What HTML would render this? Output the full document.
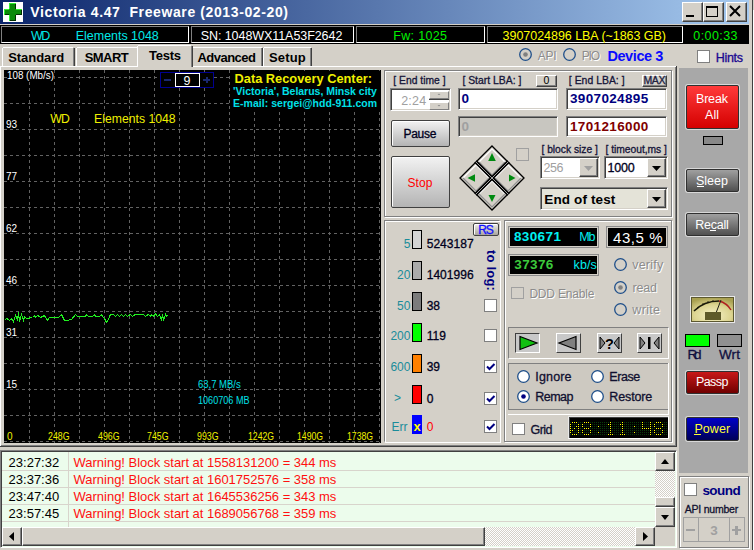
<!DOCTYPE html>
<html><head><meta charset="utf-8"><style>
html,body{margin:0;padding:0}
body{width:754px;height:550px;overflow:hidden;position:relative;background:#d4d0c8;font-family:"Liberation Sans",sans-serif}
body>div{position:absolute;box-sizing:border-box}
.t{white-space:pre}
</style></head><body>
<div style="left:749px;top:0px;width:3px;height:550px;background:#d4d0c8"></div>
<div style="left:752px;top:0px;width:1px;height:550px;background:#404040"></div>
<div style="left:753px;top:10px;width:1px;height:540px;background:#fff"></div>
<div style="left:0px;top:0px;width:749px;height:24px;background:linear-gradient(to right,#0a246a,#a6caf0)"></div>
<div style="left:3px;top:2px;width:20px;height:20px;background:#fff"></div>
<div style="left:9px;top:3px;width:7px;height:18px;background:#0a8a0a"></div>
<div style="left:4px;top:9px;width:18px;height:6px;background:#0a8a0a"></div>
<div style="left:9px;top:3px;width:1px;height:6px;background:#30f030"></div>
<div style="left:9px;top:3px;width:7px;height:1px;background:#30f030"></div>
<div style="left:4px;top:9px;width:5px;height:1px;background:#30f030"></div>
<div style="left:4px;top:9px;width:1px;height:6px;background:#30f030"></div>
<div style="left:16px;top:9px;width:6px;height:1px;background:#30f030"></div>
<div style="left:9px;top:15px;width:1px;height:6px;background:#30f030"></div>
<div style="left:15px;top:4px;width:1px;height:5px;background:#003000"></div>
<div style="left:21px;top:10px;width:1px;height:5px;background:#003000"></div>
<div style="left:5px;top:14px;width:4px;height:1px;background:#003000"></div>
<div style="left:16px;top:14px;width:6px;height:1px;background:#003000"></div>
<div style="left:15px;top:15px;width:1px;height:6px;background:#003000"></div>
<div style="left:10px;top:20px;width:6px;height:1px;background:#003000"></div>
<div class="t" style="left:30.30px;top:5.00px;font-size:14px;line-height:14px;color:#fff;font-weight:bold;letter-spacing:0.609px;">Victoria 4.47  Freeware (2013-02-20)</div>
<div style="left:682px;top:2px;width:21px;height:20px;background:#d4d0c8;border:1px solid;border-color:#fff #404040 #404040 #fff;box-shadow:inset -1px -1px #808080;"></div>
<div style="left:703px;top:2px;width:21px;height:20px;background:#d4d0c8;border:1px solid;border-color:#fff #404040 #404040 #fff;box-shadow:inset -1px -1px #808080;"></div>
<div style="left:726px;top:2px;width:21px;height:20px;background:#d4d0c8;border:1px solid;border-color:#fff #404040 #404040 #fff;box-shadow:inset -1px -1px #808080;"></div>
<div style="left:686px;top:15px;width:8px;height:2px;background:#000"></div>
<div style="left:706px;top:6px;width:12px;height:11px;border:1px solid #000;border-top-width:2px"></div>
<svg style="position:absolute;left:729px;top:5px" width="12" height="12" viewBox="0 0 12 12"><path d="M1 1L11 11M11 1L1 11" stroke="#000" stroke-width="2"/></svg>
<div style="left:0px;top:25px;width:749px;height:19px;background:#000"></div>
<div style="left:1px;top:26px;width:188px;height:17px;border:1px solid;border-color:#808080 #fff #fff #808080"></div>
<div style="left:191px;top:26px;width:163px;height:17px;border:1px solid;border-color:#808080 #fff #fff #808080"></div>
<div style="left:356px;top:26px;width:129px;height:17px;border:1px solid;border-color:#808080 #fff #fff #808080"></div>
<div style="left:487px;top:26px;width:196px;height:17px;border:1px solid;border-color:#808080 #fff #fff #808080"></div>
<div class="t" style="left:31.00px;top:30.00px;font-size:12.5px;line-height:12.5px;color:#00e8e8;letter-spacing:-1.575px;">WD</div>
<div class="t" style="left:75.80px;top:30.00px;font-size:12.5px;line-height:12.5px;color:#00e8e8;letter-spacing:-0.031px;">Elements 1048</div>
<div class="t" style="left:200.70px;top:30.00px;font-size:12.5px;line-height:12.5px;color:#fff;letter-spacing:-0.067px;">SN: 1048WX11A53F2642</div>
<div class="t" style="left:393.30px;top:30.00px;font-size:12.5px;line-height:12.5px;color:#00f000;letter-spacing:0.318px;">Fw: 1025</div>
<div class="t" style="left:502.60px;top:30.00px;font-size:12.5px;line-height:12.5px;color:#ffff00;letter-spacing:-0.041px;">3907024896 LBA (~1863 GB)</div>
<div class="t" style="left:693.30px;top:30.00px;font-size:12.5px;line-height:12.5px;color:#00f000;letter-spacing:0.408px;">0:00:33</div>
<div style="left:0px;top:66px;width:677px;height:1px;background:#fff"></div>
<div style="left:0px;top:66px;width:1px;height:381px;background:#fff"></div>
<div style="left:675px;top:67px;width:1px;height:379px;background:#808080"></div>
<div style="left:676px;top:66px;width:1px;height:381px;background:#404040"></div>
<div style="left:1px;top:445px;width:675px;height:1px;background:#808080"></div>
<div style="left:0px;top:446px;width:677px;height:1px;background:#404040"></div>
<div style="left:2px;top:48px;width:1px;height:18px;background:#fff"></div>
<div style="left:3px;top:47px;width:70px;height:1px;background:#fff"></div>
<div style="left:73px;top:48px;width:1px;height:18px;background:#808080"></div>
<div style="left:74px;top:48px;width:1px;height:18px;background:#404040"></div>
<div style="left:76px;top:48px;width:1px;height:18px;background:#fff"></div>
<div style="left:77px;top:47px;width:60px;height:1px;background:#fff"></div>
<div style="left:193px;top:47px;width:69px;height:1px;background:#fff"></div>
<div style="left:261px;top:48px;width:1px;height:18px;background:#808080"></div>
<div style="left:262px;top:48px;width:1px;height:18px;background:#404040"></div>
<div style="left:263px;top:48px;width:1px;height:18px;background:#fff"></div>
<div style="left:264px;top:47px;width:47px;height:1px;background:#fff"></div>
<div style="left:310px;top:48px;width:1px;height:18px;background:#808080"></div>
<div style="left:311px;top:48px;width:1px;height:18px;background:#404040"></div>
<div style="left:137px;top:45px;width:55px;height:22px;background:#d4d0c8"></div>
<div style="left:137px;top:46px;width:1px;height:21px;background:#fff"></div>
<div style="left:138px;top:45px;width:53px;height:1px;background:#fff"></div>
<div style="left:191px;top:46px;width:1px;height:21px;background:#808080"></div>
<div style="left:192px;top:46px;width:1px;height:21px;background:#404040"></div>
<div class="t" style="left:8.20px;top:51.00px;font-size:13px;line-height:13px;color:#000;font-weight:bold;letter-spacing:-0.054px;">Standard</div>
<div class="t" style="left:84.70px;top:51.00px;font-size:13px;line-height:13px;color:#000;font-weight:bold;letter-spacing:-0.562px;">SMART</div>
<div class="t" style="left:149.00px;top:49.00px;font-size:13px;line-height:13px;color:#000;font-weight:bold;letter-spacing:-0.250px;">Tests</div>
<div class="t" style="left:197.40px;top:51.00px;font-size:13px;line-height:13px;color:#000;font-weight:bold;letter-spacing:-0.504px;">Advanced</div>
<div class="t" style="left:269.00px;top:51.00px;font-size:13px;line-height:13px;color:#000;font-weight:bold;letter-spacing:0.144px;">Setup</div>
<svg style="position:absolute;left:519px;top:48px" width="13" height="13" viewBox="0 0 13 13"><circle cx="6.5" cy="6.5" r="5.8" fill="none" stroke="#1f4f8a" stroke-width="1.3"/><circle cx="6.5" cy="6.5" r="2.3" fill="#808080"/></svg>
<div class="t" style="left:537.70px;top:50.00px;font-size:12px;line-height:12px;color:#8c8c8c;letter-spacing:-0.188px;text-shadow:1px 1px #fff">API</div>
<svg style="position:absolute;left:563px;top:48px" width="13" height="13" viewBox="0 0 13 13"><circle cx="6.5" cy="6.5" r="5.8" fill="none" stroke="#1f4f8a" stroke-width="1.3"/></svg>
<div class="t" style="left:581.70px;top:50.00px;font-size:12px;line-height:12px;color:#8c8c8c;letter-spacing:-1.162px;text-shadow:1px 1px #fff">PIO</div>
<div class="t" style="left:607.40px;top:49.00px;font-size:14.5px;line-height:14.5px;color:#0a0aff;font-weight:bold;letter-spacing:-0.411px;">Device 3</div>
<div style="left:697px;top:50px;width:13px;height:13px;background:#fff;border:1px solid #808080"></div>
<div class="t" style="left:715.70px;top:52.00px;font-size:12.5px;line-height:12.5px;color:#1a0890;letter-spacing:-0.300px;-webkit-text-stroke:0.3px #1a0890;">Hints</div>
<svg style="position:absolute;left:4px;top:70px" width="377" height="373" viewBox="0 0 377 373"><rect width="377" height="373" fill="#000"/><line x1="25.5" y1="0" x2="25.5" y2="373" stroke="#626262" stroke-dasharray="3 3"/><line x1="50.5" y1="0" x2="50.5" y2="373" stroke="#626262" stroke-dasharray="3 3"/><line x1="75.5" y1="0" x2="75.5" y2="373" stroke="#626262" stroke-dasharray="3 3"/><line x1="100.5" y1="0" x2="100.5" y2="373" stroke="#626262" stroke-dasharray="3 3"/><line x1="125.5" y1="0" x2="125.5" y2="373" stroke="#626262" stroke-dasharray="3 3"/><line x1="150.5" y1="0" x2="150.5" y2="373" stroke="#626262" stroke-dasharray="3 3"/><line x1="175.5" y1="0" x2="175.5" y2="373" stroke="#626262" stroke-dasharray="3 3"/><line x1="200.5" y1="0" x2="200.5" y2="373" stroke="#626262" stroke-dasharray="3 3"/><line x1="225.5" y1="0" x2="225.5" y2="373" stroke="#626262" stroke-dasharray="3 3"/><line x1="250.5" y1="0" x2="250.5" y2="373" stroke="#626262" stroke-dasharray="3 3"/><line x1="275.5" y1="0" x2="275.5" y2="373" stroke="#626262" stroke-dasharray="3 3"/><line x1="300.5" y1="0" x2="300.5" y2="373" stroke="#626262" stroke-dasharray="3 3"/><line x1="325.5" y1="0" x2="325.5" y2="373" stroke="#626262" stroke-dasharray="3 3"/><line x1="350.5" y1="0" x2="350.5" y2="373" stroke="#626262" stroke-dasharray="3 3"/><line x1="375.5" y1="0" x2="375.5" y2="373" stroke="#626262" stroke-dasharray="3 3"/><line x1="0" y1="7.5" x2="377" y2="7.5" stroke="#626262" stroke-dasharray="3 3"/><line x1="0" y1="33.5" x2="377" y2="33.5" stroke="#626262" stroke-dasharray="3 3"/><line x1="0" y1="59.5" x2="377" y2="59.5" stroke="#626262" stroke-dasharray="3 3"/><line x1="0" y1="85.5" x2="377" y2="85.5" stroke="#626262" stroke-dasharray="3 3"/><line x1="0" y1="111.5" x2="377" y2="111.5" stroke="#626262" stroke-dasharray="3 3"/><line x1="0" y1="137.5" x2="377" y2="137.5" stroke="#626262" stroke-dasharray="3 3"/><line x1="0" y1="163.5" x2="377" y2="163.5" stroke="#626262" stroke-dasharray="3 3"/><line x1="0" y1="189.5" x2="377" y2="189.5" stroke="#626262" stroke-dasharray="3 3"/><line x1="0" y1="215.5" x2="377" y2="215.5" stroke="#626262" stroke-dasharray="3 3"/><line x1="0" y1="241.5" x2="377" y2="241.5" stroke="#626262" stroke-dasharray="3 3"/><line x1="0" y1="267.5" x2="377" y2="267.5" stroke="#626262" stroke-dasharray="3 3"/><line x1="0" y1="293.5" x2="377" y2="293.5" stroke="#626262" stroke-dasharray="3 3"/><line x1="0" y1="319.5" x2="377" y2="319.5" stroke="#626262" stroke-dasharray="3 3"/><line x1="0" y1="345.5" x2="377" y2="345.5" stroke="#626262" stroke-dasharray="3 3"/><line x1="0" y1="371.5" x2="377" y2="371.5" stroke="#626262" stroke-dasharray="3 3"/><polyline points="0.5,250.5 2.5,248.5 5.5,250.5 7.5,248.5 9.5,251.5 11.5,245.5 13.5,249.5 14.5,242.5 15.5,251.5 17.5,244.5 19.5,250.5 20.5,246.5 22.5,248.5 28.5,247.5 30.5,245.5 31.5,247.5 33.5,245.5 36.5,247.5 40.5,245.5 43.5,250.5 45.5,247.5 54.5,247.5 57.5,244.5 60.5,250.5 62.5,250.5 67.5,249.5 71.5,244.5 73.5,246.5 81.5,246.5 82.5,244.5 84.5,246.5 88.5,246.5 90.5,244.5 91.5,246.5 95.5,246.5 97.5,244.5 98.5,246.5 100.5,248.5 102.5,252.5 104.5,249.5 106.5,244.5 109.5,244.5 111.5,246.5 113.5,244.5 115.5,246.5 117.5,244.5 119.5,246.5 121.5,244.5 123.5,246.5 126.5,244.5 128.5,246.5 131.5,244.5 139.5,244.5 141.5,246.5 144.5,244.5 146.5,246.5 147.5,244.5 149.5,246.5 151.5,243.5 153.5,246.5 155.5,244.5 157.5,249.5 158.5,244.5 159.5,250.5 161.5,244.5 162.5,246.5 163.5,245.5" fill="none" stroke="#20f020" stroke-width="1.1" shape-rendering="crispEdges"/><rect x="156.5" y="2.5" width="53" height="15" fill="#000" stroke="#000090"/><rect x="171.5" y="3.5" width="24" height="13" fill="#000" stroke="#fff"/><rect x="160" y="9" width="7" height="2" fill="#1a2870"/><rect x="199" y="9" width="7" height="2" fill="#1a2870"/><rect x="202" y="7" width="2" height="6" fill="#1a2870"/></svg>
<div class="t" style="left:183.50px;top:75.00px;font-size:12.5px;line-height:12.5px;color:#fff;">9</div>
<div class="t" style="left:6.60px;top:71.00px;font-size:10px;line-height:10px;color:#fff;transform:scaleX(0.9822);transform-origin:0 0;background:#000">108 (Mb/s)</div>
<div class="t" style="left:6.00px;top:120.00px;font-size:10px;line-height:10px;color:#fff;background:linear-gradient(#000 0 9px,transparent 9px)">93</div>
<div class="t" style="left:6.00px;top:172.00px;font-size:10px;line-height:10px;color:#fff;background:linear-gradient(#000 0 9px,transparent 9px)">77</div>
<div class="t" style="left:6.00px;top:224.00px;font-size:10px;line-height:10px;color:#fff;background:linear-gradient(#000 0 9px,transparent 9px)">62</div>
<div class="t" style="left:6.00px;top:276.00px;font-size:10px;line-height:10px;color:#fff;background:linear-gradient(#000 0 9px,transparent 9px)">46</div>
<div class="t" style="left:6.00px;top:328.00px;font-size:10px;line-height:10px;color:#fff;background:linear-gradient(#000 0 9px,transparent 9px)">31</div>
<div class="t" style="left:6.00px;top:380.00px;font-size:10px;line-height:10px;color:#fff;background:linear-gradient(#000 0 9px,transparent 9px)">15</div>
<div class="t" style="left:50.30px;top:113.00px;font-size:12.2px;line-height:12.2px;color:#f0f000;letter-spacing:-0.875px;">WD</div>
<div class="t" style="left:94.10px;top:113.00px;font-size:12.2px;line-height:12.2px;color:#f0f000;letter-spacing:0.021px;">Elements 1048</div>
<div class="t" style="left:6.90px;top:432.00px;font-size:10px;line-height:10px;color:#f0f000;background:linear-gradient(#000 0 9px,transparent 9px)">0</div>
<div class="t" style="left:47.60px;top:432.00px;font-size:10px;line-height:10px;color:#f0f000;transform:scaleX(0.8776);transform-origin:0 0;background:linear-gradient(#000 0 9px,transparent 9px)">248G</div>
<div class="t" style="left:97.50px;top:432.00px;font-size:10px;line-height:10px;color:#f0f000;transform:scaleX(0.8776);transform-origin:0 0;background:linear-gradient(#000 0 9px,transparent 9px)">496G</div>
<div class="t" style="left:147.00px;top:432.00px;font-size:10px;line-height:10px;color:#f0f000;transform:scaleX(0.8776);transform-origin:0 0;background:linear-gradient(#000 0 9px,transparent 9px)">745G</div>
<div class="t" style="left:197.30px;top:432.00px;font-size:10px;line-height:10px;color:#f0f000;transform:scaleX(0.8776);transform-origin:0 0;background:linear-gradient(#000 0 9px,transparent 9px)">993G</div>
<div class="t" style="left:248.20px;top:432.00px;font-size:10px;line-height:10px;color:#f0f000;transform:scaleX(0.8667);transform-origin:0 0;background:linear-gradient(#000 0 9px,transparent 9px)">1242G</div>
<div class="t" style="left:297.00px;top:432.00px;font-size:10px;line-height:10px;color:#f0f000;transform:scaleX(0.8667);transform-origin:0 0;background:linear-gradient(#000 0 9px,transparent 9px)">1490G</div>
<div class="t" style="left:346.60px;top:432.00px;font-size:10px;line-height:10px;color:#f0f000;transform:scaleX(0.8667);transform-origin:0 0;background:linear-gradient(#000 0 9px,transparent 9px)">1738G</div>
<div class="t" style="left:198.00px;top:380.00px;font-size:10px;line-height:10px;color:#00e0e8;transform:scaleX(0.9489);transform-origin:0 0;">63,7 MB/s</div>
<div class="t" style="left:198.00px;top:396.00px;font-size:10px;line-height:10px;color:#00e0e8;transform:scaleX(0.9093);transform-origin:0 0;">1060706 MB</div>
<div style="left:231px;top:71px;width:149px;height:38px;background:#000"></div>
<div class="t" style="left:234.50px;top:73.00px;font-size:12.8px;line-height:12.8px;color:#f0f000;font-weight:bold;letter-spacing:0.013px;">Data Recovery Center:</div>
<div class="t" style="left:233.00px;top:86.00px;font-size:10.5px;line-height:10.5px;color:#00e0e8;font-weight:bold;letter-spacing:-0.013px;">'Victoria', Belarus, Minsk city</div>
<div class="t" style="left:233.00px;top:98.00px;font-size:10.5px;line-height:10.5px;color:#00e0e8;font-weight:bold;letter-spacing:0.030px;">E-mail: sergei@hdd-911.com</div>
<div style="left:385px;top:71px;width:288px;height:147px;border:1px solid #fff"></div>
<div style="left:384px;top:70px;width:288px;height:147px;border:1px solid #808080;border-right-color:transparent;border-bottom-color:transparent"></div>
<div style="left:384px;top:70px;width:288px;height:147px;border:1px solid transparent;border-right-color:#808080;border-bottom-color:#808080;border-top:0;border-left:0"></div>
<div class="t" style="left:393.30px;top:76.00px;font-size:10.3px;line-height:10.3px;color:#141438;letter-spacing:0.011px;-webkit-text-stroke:0.3px #141438;">[ End time ]</div>
<div style="left:390px;top:88px;width:61px;height:23px;background:#fff;border:1px solid;border-color:#808080 #fff #fff #808080;box-shadow:inset 1px 1px #404040, inset -1px -1px #d4d0c8;"></div>
<div style="left:429px;top:91px;width:20px;height:8px;background:#d4d0c8;border:1px solid;border-color:#fff #808080 #808080 #fff"></div>
<div style="left:429px;top:99px;width:20px;height:1px;background:#404040"></div>
<div style="left:429px;top:102px;width:20px;height:8px;background:#d4d0c8;border:1px solid;border-color:#fff #808080 #808080 #fff"></div>
<svg style="position:absolute;left:429px;top:91px" width="20" height="19" viewBox="0 0 20 19"><path d="M8.5 4h3l-1.5 -1.5z M8.5 14h3l-1.5 1.5z" fill="#909090"/></svg>
<div class="t" style="left:401.20px;top:95.00px;font-size:12.5px;line-height:12.5px;color:#a0a0a0;letter-spacing:0.208px;">2:24</div>
<div class="t" style="left:462.40px;top:76.00px;font-size:10.4px;line-height:10.4px;color:#141438;letter-spacing:0.010px;-webkit-text-stroke:0.3px #141438;">[ Start LBA: ]</div>
<div style="left:536px;top:75px;width:21px;height:12px;background:#d4d0c8;border:1px solid;border-color:#fff #404040 #404040 #fff;box-shadow:inset -1px -1px #808080;"></div>
<div class="t" style="left:543.56px;top:75.00px;font-size:10.5px;line-height:10.5px;color:#000;">0</div>
<div style="left:458px;top:88px;width:100px;height:22px;background:#fff;border:1px solid;border-color:#808080 #fff #fff #808080;box-shadow:inset 1px 1px #404040, inset -1px -1px #d4d0c8;"></div>
<div class="t" style="left:461.50px;top:92.00px;font-size:13.5px;line-height:13.5px;color:#000080;font-weight:bold;">0</div>
<div style="left:458px;top:116px;width:100px;height:21px;background:#c8c6c0;border:1px solid;border-color:#808080 #fff #fff #808080;box-shadow:inset 1px 1px #404040, inset -1px -1px #d4d0c8;"></div>
<div class="t" style="left:461.50px;top:120.00px;font-size:13.5px;line-height:13.5px;color:#a0a0a0;font-weight:bold;">0</div>
<div class="t" style="left:568.80px;top:76.00px;font-size:10.4px;line-height:10.4px;color:#141438;letter-spacing:0.030px;-webkit-text-stroke:0.3px #141438;">[ End LBA: ]</div>
<div style="left:642px;top:75px;width:25px;height:12px;background:#d4d0c8;border:1px solid;border-color:#fff #404040 #404040 #fff;box-shadow:inset -1px -1px #808080;"></div>
<div class="t" style="left:643.50px;top:75.00px;font-size:10.5px;line-height:10.5px;color:#202040;letter-spacing:-0.375px;-webkit-text-stroke:0.3px #202040;">MAX</div>
<div style="left:566px;top:88px;width:101px;height:22px;background:#fff;border:1px solid;border-color:#808080 #fff #fff #808080;box-shadow:inset 1px 1px #404040, inset -1px -1px #d4d0c8;"></div>
<div class="t" style="left:569.90px;top:92.00px;font-size:13.5px;line-height:13.5px;color:#000080;font-weight:bold;letter-spacing:0.364px;">3907024895</div>
<div style="left:566px;top:116px;width:101px;height:21px;background:#fff;border:1px solid;border-color:#808080 #fff #fff #808080;box-shadow:inset 1px 1px #404040, inset -1px -1px #d4d0c8;"></div>
<div class="t" style="left:570.00px;top:120.00px;font-size:13.5px;line-height:13.5px;color:#800000;font-weight:bold;letter-spacing:0.364px;">1701216000</div>
<div style="left:391px;top:120px;width:59px;height:27px;background:linear-gradient(#f2f2f2,#b4b4b4);border:1px solid #404040;border-radius:2px;box-shadow:inset 1px 1px #fff"></div>
<div class="t" style="left:403.40px;top:128.00px;font-size:12px;line-height:12px;color:#000020;letter-spacing:-0.250px;-webkit-text-stroke:0.3px #000020;">Pause</div>
<div style="left:391px;top:156px;width:59px;height:52px;background:linear-gradient(#f2f2f2,#b4b4b4);border:1px solid #404040;border-radius:2px;box-shadow:inset 1px 1px #fff"></div>
<div class="t" style="left:407.40px;top:177.00px;font-size:12px;line-height:12px;color:#ff0000;letter-spacing:0.125px;">Stop</div>
<svg style="position:absolute;left:459px;top:145px" width="66" height="66" viewBox="0 0 66 66"><g transform="translate(33,33)">
<polygon points="0,-32 32,0 0,32 -32,0" fill="#d4d0c8" stroke="#000" stroke-width="1.3"/>
<g fill="none" stroke-width="1.2">
<path d="M-13,-16 L0,-29 L13,-16" stroke="#fff"/><path d="M13,-16 L0,-3 L-13,-16" stroke="#909090"/>
<path d="M-29,0 L-16,-13 L-3,0" stroke="#fff"/><path d="M-3,0 L-16,13 L-29,0" stroke="#909090"/>
<path d="M3,0 L16,-13 L29,0" stroke="#fff"/><path d="M29,0 L16,13 L3,0" stroke="#909090"/>
<path d="M-13,16 L0,3 L13,16" stroke="#fff"/><path d="M13,16 L0,29 L-13,16" stroke="#909090"/>
</g>
<line x1="-16.5" y1="-16.5" x2="16.5" y2="16.5" stroke="#000" stroke-width="3.6"/>
<line x1="16.5" y1="-16.5" x2="-16.5" y2="16.5" stroke="#000" stroke-width="3.6"/>
<line x1="-16.5" y1="-16.5" x2="16.5" y2="16.5" stroke="#a0a0a0" stroke-width="1"/>
<line x1="16.5" y1="-16.5" x2="-16.5" y2="16.5" stroke="#a0a0a0" stroke-width="1"/>
<g fill="#008a10">
<polygon points="0,-25 3.8,-17 -3.8,-17"/>
<polygon points="-24.5,0 -17,-3.8 -17,3.8"/>
<polygon points="23.5,0 17,-3.5 17,3.5"/>
<polygon points="0,24 3.5,17 -3.5,17"/>
</g></g></svg>
<div style="left:516px;top:148px;width:13px;height:13px;border:1px solid #a0a0a0"></div>
<div class="t" style="left:541.50px;top:145.00px;font-size:10.3px;line-height:10.3px;color:#141438;letter-spacing:-0.029px;-webkit-text-stroke:0.3px #141438;">[ block size ]</div>
<div class="t" style="left:605.60px;top:145.00px;font-size:10.3px;line-height:10.3px;color:#141438;letter-spacing:-0.038px;-webkit-text-stroke:0.3px #141438;">[ timeout,ms ]</div>
<div style="left:540px;top:156px;width:60px;height:23px;background:#fff;border:1px solid;border-color:#808080 #fff #fff #808080;box-shadow:inset 1px 1px #404040, inset -1px -1px #d4d0c8;"></div>
<div style="left:579px;top:158px;width:19px;height:19px;background:#d4d0c8;border:1px solid;border-color:#fff #404040 #404040 #fff;box-shadow:inset -1px -1px #808080;"></div>
<svg style="position:absolute;left:579px;top:158px" width="19" height="19" viewBox="0 0 19 19"><path d="M5 8h9l-4.5 5z" fill="#a0a0a0"/></svg>
<div class="t" style="left:543.50px;top:162.00px;font-size:12.5px;line-height:12.5px;color:#a0a0a0;letter-spacing:-0.438px;">256</div>
<div style="left:604px;top:156px;width:64px;height:23px;background:#fff;border:1px solid;border-color:#808080 #fff #fff #808080;box-shadow:inset 1px 1px #404040, inset -1px -1px #d4d0c8;"></div>
<div style="left:647px;top:158px;width:19px;height:19px;background:#d4d0c8;border:1px solid;border-color:#fff #404040 #404040 #fff;box-shadow:inset -1px -1px #808080;"></div>
<svg style="position:absolute;left:647px;top:158px" width="19" height="19" viewBox="0 0 19 19"><path d="M5 8h9l-4.5 5z" fill="#000"/></svg>
<div class="t" style="left:607.60px;top:162.00px;font-size:12.5px;line-height:12.5px;color:#000020;letter-spacing:-0.250px;-webkit-text-stroke:0.3px #000020;">1000</div>
<div style="left:540px;top:187px;width:128px;height:23px;background:#e4e3d8;border:1px solid;border-color:#808080 #fff #fff #808080;box-shadow:inset 1px 1px #404040, inset -1px -1px #d4d0c8;"></div>
<div style="left:647px;top:189px;width:19px;height:19px;background:#d4d0c8;border:1px solid;border-color:#fff #404040 #404040 #fff;box-shadow:inset -1px -1px #808080;"></div>
<svg style="position:absolute;left:647px;top:189px" width="19" height="19" viewBox="0 0 19 19"><path d="M5 8h9l-4.5 5z" fill="#000"/></svg>
<div class="t" style="left:544.30px;top:193.00px;font-size:13.5px;line-height:13.5px;color:#000;font-weight:bold;letter-spacing:0.125px;">End of test</div>
<div style="left:385px;top:221px;width:116px;height:222px;border:1px solid #fff"></div>
<div style="left:384px;top:220px;width:116px;height:222px;border:1px solid #808080;border-right-color:transparent;border-bottom-color:transparent"></div>
<div style="left:473px;top:223px;width:26px;height:13px;background:linear-gradient(#f0eee8,#a8a49c);border:1px solid #404040;border-radius:2px;box-shadow:inset 1px 1px #fff"></div>
<div class="t" style="left:478.35px;top:224.00px;font-size:12px;line-height:12px;color:#1010ff;letter-spacing:-1.325px;-webkit-text-stroke:0.3px #1010ff;">RS</div>
<div style="left:412px;top:230px;width:10px;height:19px;background:#d4d4d4;border:1px solid #000;box-shadow:inset 0 0 0 0 #000"></div>
<div class="t" style="left:403.77px;top:238.00px;font-size:12px;line-height:12px;color:#1a8c9a;">5</div>
<div class="t" style="left:426.70px;top:238.00px;font-size:12px;line-height:12px;color:#000020;letter-spacing:0.042px;-webkit-text-stroke:0.3px #000020;">5243187</div>
<div style="left:412px;top:261px;width:10px;height:19px;background:#ababab;border:1px solid #000;box-shadow:inset 0 0 0 0 #000"></div>
<div class="t" style="left:397.02px;top:269.00px;font-size:12px;line-height:12px;color:#1a8c9a;">20</div>
<div class="t" style="left:426.70px;top:269.00px;font-size:12px;line-height:12px;color:#000020;letter-spacing:0.042px;-webkit-text-stroke:0.3px #000020;">1401996</div>
<div style="left:412px;top:292px;width:10px;height:19px;background:#7c7c7c;border:1px solid #000;box-shadow:inset 0 0 0 0 #000"></div>
<div class="t" style="left:397.02px;top:300.00px;font-size:12px;line-height:12px;color:#1a8c9a;">50</div>
<div class="t" style="left:426.70px;top:300.00px;font-size:12px;line-height:12px;color:#000020;-webkit-text-stroke:0.3px #000020;">38</div>
<div style="left:412px;top:323px;width:10px;height:19px;background:#00ff00;border:1px solid #000;box-shadow:inset 0 0 0 0 #000"></div>
<div class="t" style="left:390.40px;top:330.00px;font-size:12px;line-height:12px;color:#1a8c9a;">200</div>
<div class="t" style="left:426.70px;top:330.00px;font-size:12px;line-height:12px;color:#000020;-webkit-text-stroke:0.3px #000020;">119</div>
<div style="left:412px;top:354px;width:10px;height:19px;background:#ff8000;border:1px solid #000;box-shadow:inset 0 0 0 0 #000"></div>
<div class="t" style="left:390.40px;top:361.00px;font-size:12px;line-height:12px;color:#1a8c9a;">600</div>
<div class="t" style="left:426.70px;top:361.00px;font-size:12px;line-height:12px;color:#000020;-webkit-text-stroke:0.3px #000020;">39</div>
<div style="left:412px;top:385px;width:10px;height:19px;background:#ff0000;border:1px solid #000;box-shadow:inset 0 0 0 0 #000"></div>
<div class="t" style="left:394.00px;top:392.00px;font-size:12px;line-height:12px;color:#1a8c9a;">&gt;</div>
<div class="t" style="left:426.70px;top:393.00px;font-size:12px;line-height:12px;color:#000020;-webkit-text-stroke:0.3px #000020;">0</div>
<div style="left:412px;top:415px;width:10px;height:19px;background:#0000ff"></div>
<div class="t" style="left:413.38px;top:420.00px;font-size:13px;line-height:13px;color:#ffff00;font-weight:bold;">x</div>
<div class="t" style="left:391.60px;top:421.00px;font-size:12px;line-height:12px;color:#1a8c9a;">Err</div>
<div class="t" style="left:426.70px;top:421.00px;font-size:12px;line-height:12px;color:#ff0000;">0</div>
<div class="t" style="left:485px;top:250px;width:12px;height:42px;"><div style="position:absolute;left:12px;top:0;transform-origin:0 0;transform:rotate(90deg);font-size:13px;line-height:12px;font-weight:bold;color:#000080;white-space:nowrap;letter-spacing:0.2px">to log:</div></div>
<div style="left:484px;top:299px;width:13px;height:13px;background:#fff;border:1px solid #808080"></div>
<div style="left:484px;top:329px;width:13px;height:13px;background:#fff;border:1px solid #808080"></div>
<div style="left:484px;top:360px;width:13px;height:13px;background:#fff;border:1px solid #808080"></div>
<svg style="position:absolute;left:484px;top:360px" width="13" height="13" viewBox="0 0 13 13"><path d="M3 6.5l2.5 2.5l5-5" fill="none" stroke="#000080" stroke-width="2"/></svg>
<div style="left:484px;top:392px;width:13px;height:13px;background:#fff;border:1px solid #808080"></div>
<svg style="position:absolute;left:484px;top:392px" width="13" height="13" viewBox="0 0 13 13"><path d="M3 6.5l2.5 2.5l5-5" fill="none" stroke="#000080" stroke-width="2"/></svg>
<div style="left:484px;top:420px;width:13px;height:13px;background:#fff;border:1px solid #808080"></div>
<svg style="position:absolute;left:484px;top:420px" width="13" height="13" viewBox="0 0 13 13"><path d="M3 6.5l2.5 2.5l5-5" fill="none" stroke="#000080" stroke-width="2"/></svg>
<div style="left:505px;top:221px;width:168px;height:222px;border:1px solid #fff"></div>
<div style="left:504px;top:220px;width:168px;height:222px;border:1px solid #808080;border-right-color:transparent;border-bottom-color:transparent"></div>
<div style="left:504px;top:220px;width:168px;height:222px;border:1px solid transparent;border-right-color:#808080;border-bottom-color:#808080;border-top:0;border-left:0"></div>
<div style="left:508px;top:226px;width:91px;height:22px;background:#000;border:1px solid #8c8c8c;box-shadow:inset 0 0 0 1px #d4d0c8"></div>
<div class="t" style="left:513.90px;top:230.00px;font-size:13.5px;line-height:13.5px;color:#00f0f0;font-weight:bold;letter-spacing:0.400px;">830671</div>
<div class="t" style="left:579.30px;top:231.00px;font-size:12.5px;line-height:12.5px;color:#00f0f0;letter-spacing:-1.175px;">Mb</div>
<div style="left:508px;top:254px;width:91px;height:22px;background:#000;border:1px solid #8c8c8c;box-shadow:inset 0 0 0 1px #d4d0c8"></div>
<div class="t" style="left:514.30px;top:258.00px;font-size:13.5px;line-height:13.5px;color:#3cc83c;font-weight:bold;letter-spacing:0.375px;">37376</div>
<div class="t" style="left:573.60px;top:259.00px;font-size:12.5px;line-height:12.5px;color:#00f0f0;letter-spacing:0.042px;">kb/s</div>
<div style="left:606px;top:226px;width:62px;height:22px;background:#000;border:1px solid #8c8c8c;box-shadow:inset 0 0 0 1px #d4d0c8"></div>
<div class="t" style="left:613.00px;top:230.00px;font-size:15px;line-height:15px;color:#fff;letter-spacing:0.570px;">43,5 %</div>
<svg style="position:absolute;left:614px;top:258px" width="13" height="13" viewBox="0 0 13 13"><circle cx="6.5" cy="6.5" r="5.8" fill="none" stroke="#1f4f8a" stroke-width="1.3"/></svg>
<div class="t" style="left:632.20px;top:259.00px;font-size:12.5px;line-height:12.5px;color:#8c8c8c;letter-spacing:0.225px;text-shadow:1px 1px #fff">verify</div>
<svg style="position:absolute;left:614px;top:281px" width="13" height="13" viewBox="0 0 13 13"><circle cx="6.5" cy="6.5" r="5.8" fill="none" stroke="#1f4f8a" stroke-width="1.3"/><circle cx="6.5" cy="6.5" r="2.3" fill="#808080"/></svg>
<div class="t" style="left:632.60px;top:282.00px;font-size:12.5px;line-height:12.5px;color:#8c8c8c;letter-spacing:-0.200px;text-shadow:1px 1px #fff">read</div>
<svg style="position:absolute;left:614px;top:303px" width="13" height="13" viewBox="0 0 13 13"><circle cx="6.5" cy="6.5" r="5.8" fill="none" stroke="#1f4f8a" stroke-width="1.3"/></svg>
<div class="t" style="left:632.33px;top:304.00px;font-size:12.5px;line-height:12.5px;color:#8c8c8c;letter-spacing:0.325px;text-shadow:1px 1px #fff">write</div>
<div style="left:511px;top:287px;width:13px;height:12px;border:1px solid #a0a0a0"></div>
<div class="t" style="left:529.40px;top:288.00px;font-size:12px;line-height:12px;color:#8c8c8c;letter-spacing:-0.194px;text-shadow:1px 1px #fff">DDD Enable</div>
<div style="left:508px;top:327px;width:161px;height:32px;background:#cdc9c1;border:1px solid;border-color:#808080 #fff #fff #808080"></div>
<div style="left:515px;top:333px;width:25px;height:20px;background:#c8c8c8;border:1px solid;border-color:#404040 #fff #fff #404040"></div>
<svg style="position:absolute;left:515px;top:333px" width="25" height="20" viewBox="0 0 25 20"><path d="M5 3.5L22 10L5 16.5Z" fill="#10c010" stroke="#000" stroke-width="1.2"/></svg>
<div style="left:556px;top:333px;width:25px;height:20px;background:#c8c8c8;border:1px solid;border-color:#fff #404040 #404040 #fff"></div>
<div style="left:597px;top:333px;width:25px;height:20px;background:#c8c8c8;border:1px solid;border-color:#fff #404040 #404040 #fff"></div>
<div style="left:637px;top:333px;width:25px;height:20px;background:#c8c8c8;border:1px solid;border-color:#fff #404040 #404040 #fff"></div>
<svg style="position:absolute;left:556px;top:333px" width="25" height="20" viewBox="0 0 25 20"><path d="M20 3.5L3 10L20 16.5Z" fill="#808080" stroke="#000" stroke-width="1.2"/></svg>
<svg style="position:absolute;left:597px;top:333px" width="25" height="20" viewBox="0 0 25 20"><path d="M3 4L8 10L3 16Z M22 4L17 10L22 16Z" fill="#808080" stroke="#000" stroke-width="1"/><text x="12.5" y="15.5" font-family="Liberation Sans" font-weight="bold" font-size="14.5" text-anchor="middle" fill="#000">?</text></svg>
<svg style="position:absolute;left:637px;top:333px" width="25" height="20" viewBox="0 0 25 20"><path d="M3 4L8 10L3 16Z M22 4L17 10L22 16Z" fill="#808080" stroke="#000" stroke-width="1"/><rect x="11" y="4" width="2.5" height="12" fill="#000"/></svg>
<div style="left:509px;top:364px;width:159px;height:45px;background:#cdc9c1"></div>
<div style="left:508px;top:363px;width:160px;height:1px;background:#808080"></div>
<div style="left:508px;top:363px;width:1px;height:47px;background:#808080"></div>
<div style="left:508px;top:409px;width:160px;height:1px;background:#808080"></div>
<div style="left:668px;top:363px;width:1px;height:52px;background:#fff"></div>
<div style="left:508px;top:414px;width:161px;height:1px;background:#fff"></div>
<svg style="position:absolute;left:517px;top:370px" width="13" height="13" viewBox="0 0 13 13"><circle cx="6.5" cy="6.5" r="5.8" fill="#fff" stroke="#1f4f8a" stroke-width="1.3"/></svg>
<svg style="position:absolute;left:517px;top:390px" width="13" height="13" viewBox="0 0 13 13"><circle cx="6.5" cy="6.5" r="5.8" fill="#fff" stroke="#1f4f8a" stroke-width="1.3"/><circle cx="6.5" cy="6.5" r="2.3" fill="#000080"/></svg>
<svg style="position:absolute;left:591px;top:370px" width="13" height="13" viewBox="0 0 13 13"><circle cx="6.5" cy="6.5" r="5.8" fill="#fff" stroke="#1f4f8a" stroke-width="1.3"/></svg>
<svg style="position:absolute;left:591px;top:390px" width="13" height="13" viewBox="0 0 13 13"><circle cx="6.5" cy="6.5" r="5.8" fill="#fff" stroke="#1f4f8a" stroke-width="1.3"/></svg>
<div class="t" style="left:535.30px;top:371.00px;font-size:12.5px;line-height:12.5px;color:#101030;letter-spacing:0.160px;-webkit-text-stroke:0.3px #101030;">Ignore</div>
<div class="t" style="left:535.30px;top:391.00px;font-size:12.5px;line-height:12.5px;color:#101030;letter-spacing:-0.562px;-webkit-text-stroke:0.3px #101030;">Remap</div>
<div class="t" style="left:609.30px;top:371.00px;font-size:12.5px;line-height:12.5px;color:#101030;letter-spacing:-0.406px;-webkit-text-stroke:0.3px #101030;">Erase</div>
<div class="t" style="left:609.30px;top:391.00px;font-size:12.5px;line-height:12.5px;color:#101030;letter-spacing:-0.125px;-webkit-text-stroke:0.3px #101030;">Restore</div>
<div style="left:512px;top:423px;width:13px;height:12px;background:#fff;border:1px solid #808080"></div>
<div class="t" style="left:530.50px;top:424.00px;font-size:12.5px;line-height:12.5px;color:#101030;letter-spacing:-0.542px;-webkit-text-stroke:0.3px #101030;">Grid</div>
<div style="left:568px;top:416px;width:101px;height:23px;background:#000;border:1px solid;border-color:#e8e8e8 #fff #fff #e8e8e8;box-shadow:inset 1px 1px #404040"></div>
<svg style="position:absolute;left:570px;top:422px" width="98" height="14" viewBox="0 0 98 14"><rect x="0" y="0" width="1" height="1" fill="#0a3a0a"/><rect x="0" y="2" width="1" height="1" fill="#ffff00"/><rect x="0" y="4" width="1" height="1" fill="#ffff00"/><rect x="0" y="6" width="1" height="1" fill="#ffff00"/><rect x="0" y="8" width="1" height="1" fill="#ffff00"/><rect x="0" y="10" width="1" height="1" fill="#ffff00"/><rect x="0" y="12" width="1" height="1" fill="#0a3a0a"/><rect x="2" y="0" width="1" height="1" fill="#ffff00"/><rect x="2" y="2" width="1" height="1" fill="#0a3a0a"/><rect x="2" y="4" width="1" height="1" fill="#0a3a0a"/><rect x="2" y="6" width="1" height="1" fill="#0a3a0a"/><rect x="2" y="8" width="1" height="1" fill="#ffff00"/><rect x="2" y="10" width="1" height="1" fill="#0a3a0a"/><rect x="2" y="12" width="1" height="1" fill="#ffff00"/><rect x="4" y="0" width="1" height="1" fill="#ffff00"/><rect x="4" y="2" width="1" height="1" fill="#0a3a0a"/><rect x="4" y="4" width="1" height="1" fill="#0a3a0a"/><rect x="4" y="6" width="1" height="1" fill="#ffff00"/><rect x="4" y="8" width="1" height="1" fill="#0a3a0a"/><rect x="4" y="10" width="1" height="1" fill="#0a3a0a"/><rect x="4" y="12" width="1" height="1" fill="#ffff00"/><rect x="6" y="0" width="1" height="1" fill="#ffff00"/><rect x="6" y="2" width="1" height="1" fill="#0a3a0a"/><rect x="6" y="4" width="1" height="1" fill="#ffff00"/><rect x="6" y="6" width="1" height="1" fill="#0a3a0a"/><rect x="6" y="8" width="1" height="1" fill="#0a3a0a"/><rect x="6" y="10" width="1" height="1" fill="#0a3a0a"/><rect x="6" y="12" width="1" height="1" fill="#ffff00"/><rect x="8" y="0" width="1" height="1" fill="#0a3a0a"/><rect x="8" y="2" width="1" height="1" fill="#ffff00"/><rect x="8" y="4" width="1" height="1" fill="#ffff00"/><rect x="8" y="6" width="1" height="1" fill="#ffff00"/><rect x="8" y="8" width="1" height="1" fill="#ffff00"/><rect x="8" y="10" width="1" height="1" fill="#ffff00"/><rect x="8" y="12" width="1" height="1" fill="#0a3a0a"/><rect x="10" y="0" width="1" height="1" fill="#0a3a0a"/><rect x="10" y="2" width="1" height="1" fill="#0a3a0a"/><rect x="10" y="4" width="1" height="1" fill="#0a3a0a"/><rect x="10" y="6" width="1" height="1" fill="#0a3a0a"/><rect x="10" y="8" width="1" height="1" fill="#0a3a0a"/><rect x="10" y="10" width="1" height="1" fill="#0a3a0a"/><rect x="10" y="12" width="1" height="1" fill="#0a3a0a"/><rect x="12" y="0" width="1" height="1" fill="#0a3a0a"/><rect x="12" y="2" width="1" height="1" fill="#ffff00"/><rect x="12" y="4" width="1" height="1" fill="#ffff00"/><rect x="12" y="6" width="1" height="1" fill="#0a3a0a"/><rect x="12" y="8" width="1" height="1" fill="#ffff00"/><rect x="12" y="10" width="1" height="1" fill="#ffff00"/><rect x="12" y="12" width="1" height="1" fill="#0a3a0a"/><rect x="14" y="0" width="1" height="1" fill="#ffff00"/><rect x="14" y="2" width="1" height="1" fill="#0a3a0a"/><rect x="14" y="4" width="1" height="1" fill="#0a3a0a"/><rect x="14" y="6" width="1" height="1" fill="#ffff00"/><rect x="14" y="8" width="1" height="1" fill="#0a3a0a"/><rect x="14" y="10" width="1" height="1" fill="#0a3a0a"/><rect x="14" y="12" width="1" height="1" fill="#ffff00"/><rect x="16" y="0" width="1" height="1" fill="#ffff00"/><rect x="16" y="2" width="1" height="1" fill="#0a3a0a"/><rect x="16" y="4" width="1" height="1" fill="#0a3a0a"/><rect x="16" y="6" width="1" height="1" fill="#ffff00"/><rect x="16" y="8" width="1" height="1" fill="#0a3a0a"/><rect x="16" y="10" width="1" height="1" fill="#0a3a0a"/><rect x="16" y="12" width="1" height="1" fill="#ffff00"/><rect x="18" y="0" width="1" height="1" fill="#ffff00"/><rect x="18" y="2" width="1" height="1" fill="#0a3a0a"/><rect x="18" y="4" width="1" height="1" fill="#0a3a0a"/><rect x="18" y="6" width="1" height="1" fill="#ffff00"/><rect x="18" y="8" width="1" height="1" fill="#0a3a0a"/><rect x="18" y="10" width="1" height="1" fill="#0a3a0a"/><rect x="18" y="12" width="1" height="1" fill="#ffff00"/><rect x="20" y="0" width="1" height="1" fill="#0a3a0a"/><rect x="20" y="2" width="1" height="1" fill="#ffff00"/><rect x="20" y="4" width="1" height="1" fill="#ffff00"/><rect x="20" y="6" width="1" height="1" fill="#0a3a0a"/><rect x="20" y="8" width="1" height="1" fill="#ffff00"/><rect x="20" y="10" width="1" height="1" fill="#ffff00"/><rect x="20" y="12" width="1" height="1" fill="#0a3a0a"/><rect x="22" y="0" width="1" height="1" fill="#0a3a0a"/><rect x="22" y="2" width="1" height="1" fill="#0a3a0a"/><rect x="22" y="4" width="1" height="1" fill="#0a3a0a"/><rect x="22" y="6" width="1" height="1" fill="#0a3a0a"/><rect x="22" y="8" width="1" height="1" fill="#0a3a0a"/><rect x="22" y="10" width="1" height="1" fill="#0a3a0a"/><rect x="22" y="12" width="1" height="1" fill="#0a3a0a"/><rect x="24" y="0" width="1" height="1" fill="#0a3a0a"/><rect x="24" y="2" width="1" height="1" fill="#0a3a0a"/><rect x="24" y="4" width="1" height="1" fill="#0a3a0a"/><rect x="24" y="6" width="1" height="1" fill="#0a3a0a"/><rect x="24" y="8" width="1" height="1" fill="#0a3a0a"/><rect x="24" y="10" width="1" height="1" fill="#0a3a0a"/><rect x="24" y="12" width="1" height="1" fill="#0a3a0a"/><rect x="26" y="0" width="1" height="1" fill="#0a3a0a"/><rect x="26" y="2" width="1" height="1" fill="#0a3a0a"/><rect x="26" y="4" width="1" height="1" fill="#0a3a0a"/><rect x="26" y="6" width="1" height="1" fill="#0a3a0a"/><rect x="26" y="8" width="1" height="1" fill="#0a3a0a"/><rect x="26" y="10" width="1" height="1" fill="#0a3a0a"/><rect x="26" y="12" width="1" height="1" fill="#0a3a0a"/><rect x="28" y="0" width="1" height="1" fill="#0a3a0a"/><rect x="28" y="2" width="1" height="1" fill="#0a3a0a"/><rect x="28" y="4" width="1" height="1" fill="#ffff00"/><rect x="28" y="6" width="1" height="1" fill="#0a3a0a"/><rect x="28" y="8" width="1" height="1" fill="#0a3a0a"/><rect x="28" y="10" width="1" height="1" fill="#ffff00"/><rect x="28" y="12" width="1" height="1" fill="#0a3a0a"/><rect x="30" y="0" width="1" height="1" fill="#0a3a0a"/><rect x="30" y="2" width="1" height="1" fill="#0a3a0a"/><rect x="30" y="4" width="1" height="1" fill="#0a3a0a"/><rect x="30" y="6" width="1" height="1" fill="#0a3a0a"/><rect x="30" y="8" width="1" height="1" fill="#0a3a0a"/><rect x="30" y="10" width="1" height="1" fill="#0a3a0a"/><rect x="30" y="12" width="1" height="1" fill="#0a3a0a"/><rect x="32" y="0" width="1" height="1" fill="#0a3a0a"/><rect x="32" y="2" width="1" height="1" fill="#0a3a0a"/><rect x="32" y="4" width="1" height="1" fill="#0a3a0a"/><rect x="32" y="6" width="1" height="1" fill="#0a3a0a"/><rect x="32" y="8" width="1" height="1" fill="#0a3a0a"/><rect x="32" y="10" width="1" height="1" fill="#0a3a0a"/><rect x="32" y="12" width="1" height="1" fill="#0a3a0a"/><rect x="34" y="0" width="1" height="1" fill="#0a3a0a"/><rect x="34" y="2" width="1" height="1" fill="#0a3a0a"/><rect x="34" y="4" width="1" height="1" fill="#0a3a0a"/><rect x="34" y="6" width="1" height="1" fill="#0a3a0a"/><rect x="34" y="8" width="1" height="1" fill="#0a3a0a"/><rect x="34" y="10" width="1" height="1" fill="#0a3a0a"/><rect x="34" y="12" width="1" height="1" fill="#0a3a0a"/><rect x="36" y="0" width="1" height="1" fill="#0a3a0a"/><rect x="36" y="2" width="1" height="1" fill="#0a3a0a"/><rect x="36" y="4" width="1" height="1" fill="#0a3a0a"/><rect x="36" y="6" width="1" height="1" fill="#0a3a0a"/><rect x="36" y="8" width="1" height="1" fill="#0a3a0a"/><rect x="36" y="10" width="1" height="1" fill="#0a3a0a"/><rect x="36" y="12" width="1" height="1" fill="#0a3a0a"/><rect x="38" y="0" width="1" height="1" fill="#0a3a0a"/><rect x="38" y="2" width="1" height="1" fill="#ffff00"/><rect x="38" y="4" width="1" height="1" fill="#0a3a0a"/><rect x="38" y="6" width="1" height="1" fill="#0a3a0a"/><rect x="38" y="8" width="1" height="1" fill="#0a3a0a"/><rect x="38" y="10" width="1" height="1" fill="#0a3a0a"/><rect x="38" y="12" width="1" height="1" fill="#ffff00"/><rect x="40" y="0" width="1" height="1" fill="#ffff00"/><rect x="40" y="2" width="1" height="1" fill="#ffff00"/><rect x="40" y="4" width="1" height="1" fill="#ffff00"/><rect x="40" y="6" width="1" height="1" fill="#ffff00"/><rect x="40" y="8" width="1" height="1" fill="#ffff00"/><rect x="40" y="10" width="1" height="1" fill="#ffff00"/><rect x="40" y="12" width="1" height="1" fill="#ffff00"/><rect x="42" y="0" width="1" height="1" fill="#0a3a0a"/><rect x="42" y="2" width="1" height="1" fill="#0a3a0a"/><rect x="42" y="4" width="1" height="1" fill="#0a3a0a"/><rect x="42" y="6" width="1" height="1" fill="#0a3a0a"/><rect x="42" y="8" width="1" height="1" fill="#0a3a0a"/><rect x="42" y="10" width="1" height="1" fill="#0a3a0a"/><rect x="42" y="12" width="1" height="1" fill="#ffff00"/><rect x="44" y="0" width="1" height="1" fill="#0a3a0a"/><rect x="44" y="2" width="1" height="1" fill="#0a3a0a"/><rect x="44" y="4" width="1" height="1" fill="#0a3a0a"/><rect x="44" y="6" width="1" height="1" fill="#0a3a0a"/><rect x="44" y="8" width="1" height="1" fill="#0a3a0a"/><rect x="44" y="10" width="1" height="1" fill="#0a3a0a"/><rect x="44" y="12" width="1" height="1" fill="#0a3a0a"/><rect x="46" y="0" width="1" height="1" fill="#0a3a0a"/><rect x="46" y="2" width="1" height="1" fill="#0a3a0a"/><rect x="46" y="4" width="1" height="1" fill="#0a3a0a"/><rect x="46" y="6" width="1" height="1" fill="#0a3a0a"/><rect x="46" y="8" width="1" height="1" fill="#0a3a0a"/><rect x="46" y="10" width="1" height="1" fill="#0a3a0a"/><rect x="46" y="12" width="1" height="1" fill="#0a3a0a"/><rect x="48" y="0" width="1" height="1" fill="#0a3a0a"/><rect x="48" y="2" width="1" height="1" fill="#0a3a0a"/><rect x="48" y="4" width="1" height="1" fill="#0a3a0a"/><rect x="48" y="6" width="1" height="1" fill="#0a3a0a"/><rect x="48" y="8" width="1" height="1" fill="#0a3a0a"/><rect x="48" y="10" width="1" height="1" fill="#0a3a0a"/><rect x="48" y="12" width="1" height="1" fill="#0a3a0a"/><rect x="50" y="0" width="1" height="1" fill="#0a3a0a"/><rect x="50" y="2" width="1" height="1" fill="#ffff00"/><rect x="50" y="4" width="1" height="1" fill="#0a3a0a"/><rect x="50" y="6" width="1" height="1" fill="#0a3a0a"/><rect x="50" y="8" width="1" height="1" fill="#0a3a0a"/><rect x="50" y="10" width="1" height="1" fill="#0a3a0a"/><rect x="50" y="12" width="1" height="1" fill="#ffff00"/><rect x="52" y="0" width="1" height="1" fill="#ffff00"/><rect x="52" y="2" width="1" height="1" fill="#ffff00"/><rect x="52" y="4" width="1" height="1" fill="#ffff00"/><rect x="52" y="6" width="1" height="1" fill="#ffff00"/><rect x="52" y="8" width="1" height="1" fill="#ffff00"/><rect x="52" y="10" width="1" height="1" fill="#ffff00"/><rect x="52" y="12" width="1" height="1" fill="#ffff00"/><rect x="54" y="0" width="1" height="1" fill="#0a3a0a"/><rect x="54" y="2" width="1" height="1" fill="#0a3a0a"/><rect x="54" y="4" width="1" height="1" fill="#0a3a0a"/><rect x="54" y="6" width="1" height="1" fill="#0a3a0a"/><rect x="54" y="8" width="1" height="1" fill="#0a3a0a"/><rect x="54" y="10" width="1" height="1" fill="#0a3a0a"/><rect x="54" y="12" width="1" height="1" fill="#ffff00"/><rect x="56" y="0" width="1" height="1" fill="#0a3a0a"/><rect x="56" y="2" width="1" height="1" fill="#0a3a0a"/><rect x="56" y="4" width="1" height="1" fill="#0a3a0a"/><rect x="56" y="6" width="1" height="1" fill="#0a3a0a"/><rect x="56" y="8" width="1" height="1" fill="#0a3a0a"/><rect x="56" y="10" width="1" height="1" fill="#0a3a0a"/><rect x="56" y="12" width="1" height="1" fill="#0a3a0a"/><rect x="58" y="0" width="1" height="1" fill="#0a3a0a"/><rect x="58" y="2" width="1" height="1" fill="#0a3a0a"/><rect x="58" y="4" width="1" height="1" fill="#0a3a0a"/><rect x="58" y="6" width="1" height="1" fill="#0a3a0a"/><rect x="58" y="8" width="1" height="1" fill="#0a3a0a"/><rect x="58" y="10" width="1" height="1" fill="#0a3a0a"/><rect x="58" y="12" width="1" height="1" fill="#0a3a0a"/><rect x="60" y="0" width="1" height="1" fill="#0a3a0a"/><rect x="60" y="2" width="1" height="1" fill="#0a3a0a"/><rect x="60" y="4" width="1" height="1" fill="#0a3a0a"/><rect x="60" y="6" width="1" height="1" fill="#0a3a0a"/><rect x="60" y="8" width="1" height="1" fill="#0a3a0a"/><rect x="60" y="10" width="1" height="1" fill="#0a3a0a"/><rect x="60" y="12" width="1" height="1" fill="#0a3a0a"/><rect x="62" y="0" width="1" height="1" fill="#0a3a0a"/><rect x="62" y="2" width="1" height="1" fill="#0a3a0a"/><rect x="62" y="4" width="1" height="1" fill="#0a3a0a"/><rect x="62" y="6" width="1" height="1" fill="#0a3a0a"/><rect x="62" y="8" width="1" height="1" fill="#0a3a0a"/><rect x="62" y="10" width="1" height="1" fill="#0a3a0a"/><rect x="62" y="12" width="1" height="1" fill="#0a3a0a"/><rect x="64" y="0" width="1" height="1" fill="#0a3a0a"/><rect x="64" y="2" width="1" height="1" fill="#0a3a0a"/><rect x="64" y="4" width="1" height="1" fill="#ffff00"/><rect x="64" y="6" width="1" height="1" fill="#0a3a0a"/><rect x="64" y="8" width="1" height="1" fill="#0a3a0a"/><rect x="64" y="10" width="1" height="1" fill="#ffff00"/><rect x="64" y="12" width="1" height="1" fill="#0a3a0a"/><rect x="66" y="0" width="1" height="1" fill="#0a3a0a"/><rect x="66" y="2" width="1" height="1" fill="#0a3a0a"/><rect x="66" y="4" width="1" height="1" fill="#0a3a0a"/><rect x="66" y="6" width="1" height="1" fill="#0a3a0a"/><rect x="66" y="8" width="1" height="1" fill="#0a3a0a"/><rect x="66" y="10" width="1" height="1" fill="#0a3a0a"/><rect x="66" y="12" width="1" height="1" fill="#0a3a0a"/><rect x="68" y="0" width="1" height="1" fill="#0a3a0a"/><rect x="68" y="2" width="1" height="1" fill="#0a3a0a"/><rect x="68" y="4" width="1" height="1" fill="#0a3a0a"/><rect x="68" y="6" width="1" height="1" fill="#0a3a0a"/><rect x="68" y="8" width="1" height="1" fill="#0a3a0a"/><rect x="68" y="10" width="1" height="1" fill="#0a3a0a"/><rect x="68" y="12" width="1" height="1" fill="#0a3a0a"/><rect x="70" y="0" width="1" height="1" fill="#0a3a0a"/><rect x="70" y="2" width="1" height="1" fill="#0a3a0a"/><rect x="70" y="4" width="1" height="1" fill="#0a3a0a"/><rect x="70" y="6" width="1" height="1" fill="#0a3a0a"/><rect x="70" y="8" width="1" height="1" fill="#0a3a0a"/><rect x="70" y="10" width="1" height="1" fill="#0a3a0a"/><rect x="70" y="12" width="1" height="1" fill="#0a3a0a"/><rect x="72" y="0" width="1" height="1" fill="#ffff00"/><rect x="72" y="2" width="1" height="1" fill="#ffff00"/><rect x="72" y="4" width="1" height="1" fill="#ffff00"/><rect x="72" y="6" width="1" height="1" fill="#ffff00"/><rect x="72" y="8" width="1" height="1" fill="#0a3a0a"/><rect x="72" y="10" width="1" height="1" fill="#0a3a0a"/><rect x="72" y="12" width="1" height="1" fill="#0a3a0a"/><rect x="74" y="0" width="1" height="1" fill="#0a3a0a"/><rect x="74" y="2" width="1" height="1" fill="#0a3a0a"/><rect x="74" y="4" width="1" height="1" fill="#0a3a0a"/><rect x="74" y="6" width="1" height="1" fill="#ffff00"/><rect x="74" y="8" width="1" height="1" fill="#0a3a0a"/><rect x="74" y="10" width="1" height="1" fill="#0a3a0a"/><rect x="74" y="12" width="1" height="1" fill="#0a3a0a"/><rect x="76" y="0" width="1" height="1" fill="#0a3a0a"/><rect x="76" y="2" width="1" height="1" fill="#0a3a0a"/><rect x="76" y="4" width="1" height="1" fill="#0a3a0a"/><rect x="76" y="6" width="1" height="1" fill="#ffff00"/><rect x="76" y="8" width="1" height="1" fill="#0a3a0a"/><rect x="76" y="10" width="1" height="1" fill="#0a3a0a"/><rect x="76" y="12" width="1" height="1" fill="#0a3a0a"/><rect x="78" y="0" width="1" height="1" fill="#0a3a0a"/><rect x="78" y="2" width="1" height="1" fill="#0a3a0a"/><rect x="78" y="4" width="1" height="1" fill="#0a3a0a"/><rect x="78" y="6" width="1" height="1" fill="#ffff00"/><rect x="78" y="8" width="1" height="1" fill="#0a3a0a"/><rect x="78" y="10" width="1" height="1" fill="#0a3a0a"/><rect x="78" y="12" width="1" height="1" fill="#0a3a0a"/><rect x="80" y="0" width="1" height="1" fill="#ffff00"/><rect x="80" y="2" width="1" height="1" fill="#ffff00"/><rect x="80" y="4" width="1" height="1" fill="#ffff00"/><rect x="80" y="6" width="1" height="1" fill="#ffff00"/><rect x="80" y="8" width="1" height="1" fill="#ffff00"/><rect x="80" y="10" width="1" height="1" fill="#ffff00"/><rect x="80" y="12" width="1" height="1" fill="#ffff00"/><rect x="82" y="0" width="1" height="1" fill="#0a3a0a"/><rect x="82" y="2" width="1" height="1" fill="#0a3a0a"/><rect x="82" y="4" width="1" height="1" fill="#0a3a0a"/><rect x="82" y="6" width="1" height="1" fill="#0a3a0a"/><rect x="82" y="8" width="1" height="1" fill="#0a3a0a"/><rect x="82" y="10" width="1" height="1" fill="#0a3a0a"/><rect x="82" y="12" width="1" height="1" fill="#0a3a0a"/><rect x="84" y="0" width="1" height="1" fill="#0a3a0a"/><rect x="84" y="2" width="1" height="1" fill="#ffff00"/><rect x="84" y="4" width="1" height="1" fill="#ffff00"/><rect x="84" y="6" width="1" height="1" fill="#0a3a0a"/><rect x="84" y="8" width="1" height="1" fill="#ffff00"/><rect x="84" y="10" width="1" height="1" fill="#ffff00"/><rect x="84" y="12" width="1" height="1" fill="#0a3a0a"/><rect x="86" y="0" width="1" height="1" fill="#ffff00"/><rect x="86" y="2" width="1" height="1" fill="#0a3a0a"/><rect x="86" y="4" width="1" height="1" fill="#0a3a0a"/><rect x="86" y="6" width="1" height="1" fill="#ffff00"/><rect x="86" y="8" width="1" height="1" fill="#0a3a0a"/><rect x="86" y="10" width="1" height="1" fill="#0a3a0a"/><rect x="86" y="12" width="1" height="1" fill="#ffff00"/><rect x="88" y="0" width="1" height="1" fill="#ffff00"/><rect x="88" y="2" width="1" height="1" fill="#0a3a0a"/><rect x="88" y="4" width="1" height="1" fill="#0a3a0a"/><rect x="88" y="6" width="1" height="1" fill="#ffff00"/><rect x="88" y="8" width="1" height="1" fill="#0a3a0a"/><rect x="88" y="10" width="1" height="1" fill="#0a3a0a"/><rect x="88" y="12" width="1" height="1" fill="#ffff00"/><rect x="90" y="0" width="1" height="1" fill="#ffff00"/><rect x="90" y="2" width="1" height="1" fill="#0a3a0a"/><rect x="90" y="4" width="1" height="1" fill="#0a3a0a"/><rect x="90" y="6" width="1" height="1" fill="#ffff00"/><rect x="90" y="8" width="1" height="1" fill="#0a3a0a"/><rect x="90" y="10" width="1" height="1" fill="#0a3a0a"/><rect x="90" y="12" width="1" height="1" fill="#ffff00"/><rect x="92" y="0" width="1" height="1" fill="#0a3a0a"/><rect x="92" y="2" width="1" height="1" fill="#ffff00"/><rect x="92" y="4" width="1" height="1" fill="#ffff00"/><rect x="92" y="6" width="1" height="1" fill="#0a3a0a"/><rect x="92" y="8" width="1" height="1" fill="#ffff00"/><rect x="92" y="10" width="1" height="1" fill="#ffff00"/><rect x="92" y="12" width="1" height="1" fill="#0a3a0a"/><rect x="94" y="0" width="1" height="1" fill="#0a3a0a"/><rect x="94" y="2" width="1" height="1" fill="#0a3a0a"/><rect x="94" y="4" width="1" height="1" fill="#0a3a0a"/><rect x="94" y="6" width="1" height="1" fill="#0a3a0a"/><rect x="94" y="8" width="1" height="1" fill="#0a3a0a"/><rect x="94" y="10" width="1" height="1" fill="#0a3a0a"/><rect x="94" y="12" width="1" height="1" fill="#0a3a0a"/><rect x="96" y="0" width="1" height="1" fill="#0a3a0a"/><rect x="96" y="2" width="1" height="1" fill="#0a3a0a"/><rect x="96" y="4" width="1" height="1" fill="#0a3a0a"/><rect x="96" y="6" width="1" height="1" fill="#0a3a0a"/><rect x="96" y="8" width="1" height="1" fill="#0a3a0a"/><rect x="96" y="10" width="1" height="1" fill="#0a3a0a"/><rect x="96" y="12" width="1" height="1" fill="#0a3a0a"/></svg>
<div style="left:679px;top:68px;width:69px;height:405px;background:#a8a8a8"></div>
<div style="left:686px;top:85px;width:53px;height:44px;background:linear-gradient(#ff3a3a,#d40000);border:1px solid #303030;border-radius:2px;box-shadow:0 0 0 1px #d8d8d8"></div>
<div class="t" style="left:696.00px;top:93.00px;font-size:12.5px;line-height:12.5px;color:#fff;letter-spacing:-0.188px;">Break</div>
<div class="t" style="left:705.00px;top:109.00px;font-size:12.5px;line-height:12.5px;color:#fff;letter-spacing:0.062px;">All</div>
<div style="left:703px;top:136px;width:20px;height:9px;background:#888;border:1px solid #000"></div>
<div style="left:686px;top:169px;width:53px;height:23px;background:linear-gradient(#a0a0a0,#505050);border:1px solid #303030;border-radius:2px;box-shadow:0 0 0 1px #d8d8d8"></div>
<div class="t" style="left:696.00px;top:175.00px;font-size:12.5px;line-height:12.5px;color:#fff;">Sleep</div>
<div style="left:697px;top:186px;width:7px;height:1px;background:#fff"></div>
<div style="left:686px;top:213px;width:53px;height:23px;background:linear-gradient(#a0a0a0,#505050);border:1px solid #303030;border-radius:2px;box-shadow:0 0 0 1px #d8d8d8"></div>
<div class="t" style="left:695.30px;top:219.00px;font-size:12.5px;line-height:12.5px;color:#fff;letter-spacing:-0.250px;">Recall</div>
<div style="left:710px;top:230px;width:6px;height:1px;background:#fff"></div>
<svg style="position:absolute;left:690px;top:296px" width="45" height="27" viewBox="0 0 45 27"><defs><radialGradient id="mg" cx="0.5" cy="0.75" r="0.75"><stop offset="0" stop-color="#f6f2c8"/><stop offset="0.6" stop-color="#dcd490"/><stop offset="1" stop-color="#a8a050"/></radialGradient></defs>
<rect x="0.5" y="0.5" width="44" height="26" fill="none" stroke="#e8e8e8"/>
<rect x="1.5" y="1.5" width="42" height="24" fill="url(#mg)" stroke="#5c5830"/>
<path d="M4 15 Q14 5 29 5" fill="none" stroke="#181808" stroke-width="1.6"/>
<path d="M29 5 Q37 7 41 14" fill="none" stroke="#b02020" stroke-width="1.4"/>
<g fill="#181808"><circle cx="8" cy="11.5" r="0.8"/><circle cx="13" cy="8" r="0.8"/><circle cx="18" cy="6" r="0.8"/><circle cx="23" cy="5" r="0.8"/></g>
<line x1="26" y1="17" x2="31" y2="4" stroke="#202018" stroke-width="1"/>
<rect x="15" y="16" width="16" height="8" fill="#5e5a2a"/></svg>
<div style="left:685px;top:334px;width:25px;height:13px;background:#00ff00;border:1px solid #000"></div>
<div style="left:717px;top:334px;width:25px;height:13px;background:#909090;border:1px solid #000"></div>
<div class="t" style="left:687.60px;top:348.00px;font-size:13.5px;line-height:13.5px;color:#101040;letter-spacing:-3.250px;-webkit-text-stroke:0.3px #101040;">Rd</div>
<div class="t" style="left:719.00px;top:348.00px;font-size:13.5px;line-height:13.5px;color:#101040;letter-spacing:0.125px;-webkit-text-stroke:0.3px #101040;">Wrt</div>
<div style="left:686px;top:371px;width:53px;height:23px;background:linear-gradient(#c81818,#700000);border:1px solid #303030;border-radius:2px;box-shadow:0 0 0 1px #d8d8d8"></div>
<div class="t" style="left:696.00px;top:376.00px;font-size:12.5px;line-height:12.5px;color:#fff;letter-spacing:-0.588px;">Passp</div>
<div style="left:686px;top:417px;width:53px;height:24px;background:linear-gradient(#0000c8,#000058);border:1px solid #303030;border-radius:2px;box-shadow:0 0 0 1px #d8d8d8"></div>
<div class="t" style="left:694.40px;top:423.00px;font-size:12.5px;line-height:12.5px;color:#ffff30;letter-spacing:0.056px;">Power</div>
<div style="left:694px;top:434px;width:7px;height:1px;background:#ffff30"></div>
<div style="left:680px;top:477px;width:70px;height:72px;border:1px solid #fff"></div>
<div style="left:679px;top:476px;width:70px;height:72px;border:1px solid #808080;border-right-color:transparent;border-bottom-color:transparent"></div>
<div style="left:679px;top:476px;width:70px;height:72px;border:1px solid transparent;border-right-color:#808080;border-bottom-color:#808080;border-top:0;border-left:0"></div>
<div style="left:684px;top:483px;width:13px;height:13px;background:#fff;border:1px solid #808080"></div>
<div class="t" style="left:702.40px;top:484.00px;font-size:13.5px;line-height:13.5px;color:#000080;font-weight:bold;letter-spacing:-0.550px;">sound</div>
<div class="t" style="left:684.70px;top:504.00px;font-size:10.5px;line-height:10.5px;color:#101030;letter-spacing:-0.211px;-webkit-text-stroke:0.3px #101030;">API number</div>
<div style="left:683px;top:517px;width:62px;height:25px;border:1px solid #a0a0a0"></div>
<div style="left:698px;top:518px;width:1px;height:23px;background:#a0a0a0"></div>
<div style="left:729px;top:518px;width:1px;height:23px;background:#a0a0a0"></div>
<div style="left:686px;top:529px;width:9px;height:2px;background:#a0a0a0"></div>
<div style="left:732px;top:529px;width:9px;height:2px;background:#a0a0a0"></div>
<div style="left:735px;top:526px;width:3px;height:9px;background:#a0a0a0"></div>
<div class="t" style="left:710.25px;top:524.00px;font-size:13.5px;line-height:13.5px;color:#a0a0a0;font-weight:bold;">3</div>
<div style="left:0px;top:450px;width:677px;height:98px;border:1px solid;border-color:#808080 #fff #fff #808080;box-shadow:inset 1px 1px #404040;background:#ecfcec"></div>
<div style="left:2px;top:470px;width:653px;height:1px;background:#d8d4cc"></div>
<div style="left:2px;top:487px;width:653px;height:1px;background:#d8d4cc"></div>
<div style="left:2px;top:504px;width:653px;height:1px;background:#d8d4cc"></div>
<div style="left:2px;top:521px;width:653px;height:1px;background:#d8d4cc"></div>
<div style="left:68px;top:452px;width:1px;height:75px;background:#d8d4cc"></div>
<div class="t" style="left:8.60px;top:456.00px;font-size:13px;line-height:13px;color:#000;letter-spacing:-0.004px;">23:27:32</div>
<div class="t" style="left:73.60px;top:456.00px;font-size:13px;line-height:13px;color:#ff1010;letter-spacing:-0.022px;">Warning! Block start at 1558131200 = 344 ms</div>
<div class="t" style="left:8.60px;top:473.00px;font-size:13px;line-height:13px;color:#000;letter-spacing:-0.004px;">23:37:36</div>
<div class="t" style="left:73.60px;top:473.00px;font-size:13px;line-height:13px;color:#ff1010;letter-spacing:-0.022px;">Warning! Block start at 1601752576 = 358 ms</div>
<div class="t" style="left:8.60px;top:490.00px;font-size:13px;line-height:13px;color:#000;letter-spacing:-0.004px;">23:47:40</div>
<div class="t" style="left:73.60px;top:490.00px;font-size:13px;line-height:13px;color:#ff1010;letter-spacing:-0.022px;">Warning! Block start at 1645536256 = 343 ms</div>
<div class="t" style="left:8.60px;top:507.00px;font-size:13px;line-height:13px;color:#000;letter-spacing:-0.004px;">23:57:45</div>
<div class="t" style="left:73.60px;top:507.00px;font-size:13px;line-height:13px;color:#ff1010;letter-spacing:-0.022px;">Warning! Block start at 1689056768 = 359 ms</div>
<div style="left:655px;top:471px;width:20px;height:36px;background:repeating-conic-gradient(#fff 0 25%,#d4d0c8 0 50%) 0 0/2px 2px"></div>
<div style="left:22px;top:527px;width:633px;height:19px;background:repeating-conic-gradient(#fff 0 25%,#d4d0c8 0 50%) 0 0/2px 2px"></div>
<div style="left:655px;top:452px;width:20px;height:19px;background:#d4d0c8;border:1px solid;border-color:#fff #404040 #404040 #fff;box-shadow:inset -1px -1px #808080;"></div>
<svg style="position:absolute;left:655px;top:452px" width="20" height="19" viewBox="0 0 20 19"><path d="M6 12h8l-4-5z" fill="#000"/></svg>
<div style="left:655px;top:497px;width:20px;height:10px;background:#d4d0c8;border:1px solid;border-color:#fff #404040 #404040 #fff;box-shadow:inset -1px -1px #808080;"></div>
<div style="left:655px;top:507px;width:20px;height:20px;background:#d4d0c8;border:1px solid;border-color:#fff #404040 #404040 #fff;box-shadow:inset -1px -1px #808080;"></div>
<svg style="position:absolute;left:655px;top:507px" width="20" height="20" viewBox="0 0 20 20"><path d="M6 8h8l-4 5z" fill="#000"/></svg>
<div style="left:2px;top:527px;width:20px;height:19px;background:#d4d0c8;border:1px solid;border-color:#fff #404040 #404040 #fff;box-shadow:inset -1px -1px #808080;"></div>
<svg style="position:absolute;left:2px;top:527px" width="20" height="19" viewBox="0 0 20 19"><path d="M12 5v9l-5-4.5z" fill="#000"/></svg>
<div style="left:22px;top:527px;width:463px;height:19px;background:#d4d0c8;border:1px solid;border-color:#fff #404040 #404040 #fff;box-shadow:inset -1px -1px #808080;"></div>
<div style="left:635px;top:527px;width:20px;height:19px;background:#d4d0c8;border:1px solid;border-color:#fff #404040 #404040 #fff;box-shadow:inset -1px -1px #808080;"></div>
<svg style="position:absolute;left:635px;top:527px" width="20" height="19" viewBox="0 0 20 19"><path d="M8 5v9l5-4.5z" fill="#000"/></svg>
<div style="left:655px;top:527px;width:20px;height:19px;background:#d4d0c8"></div>
</body></html>
